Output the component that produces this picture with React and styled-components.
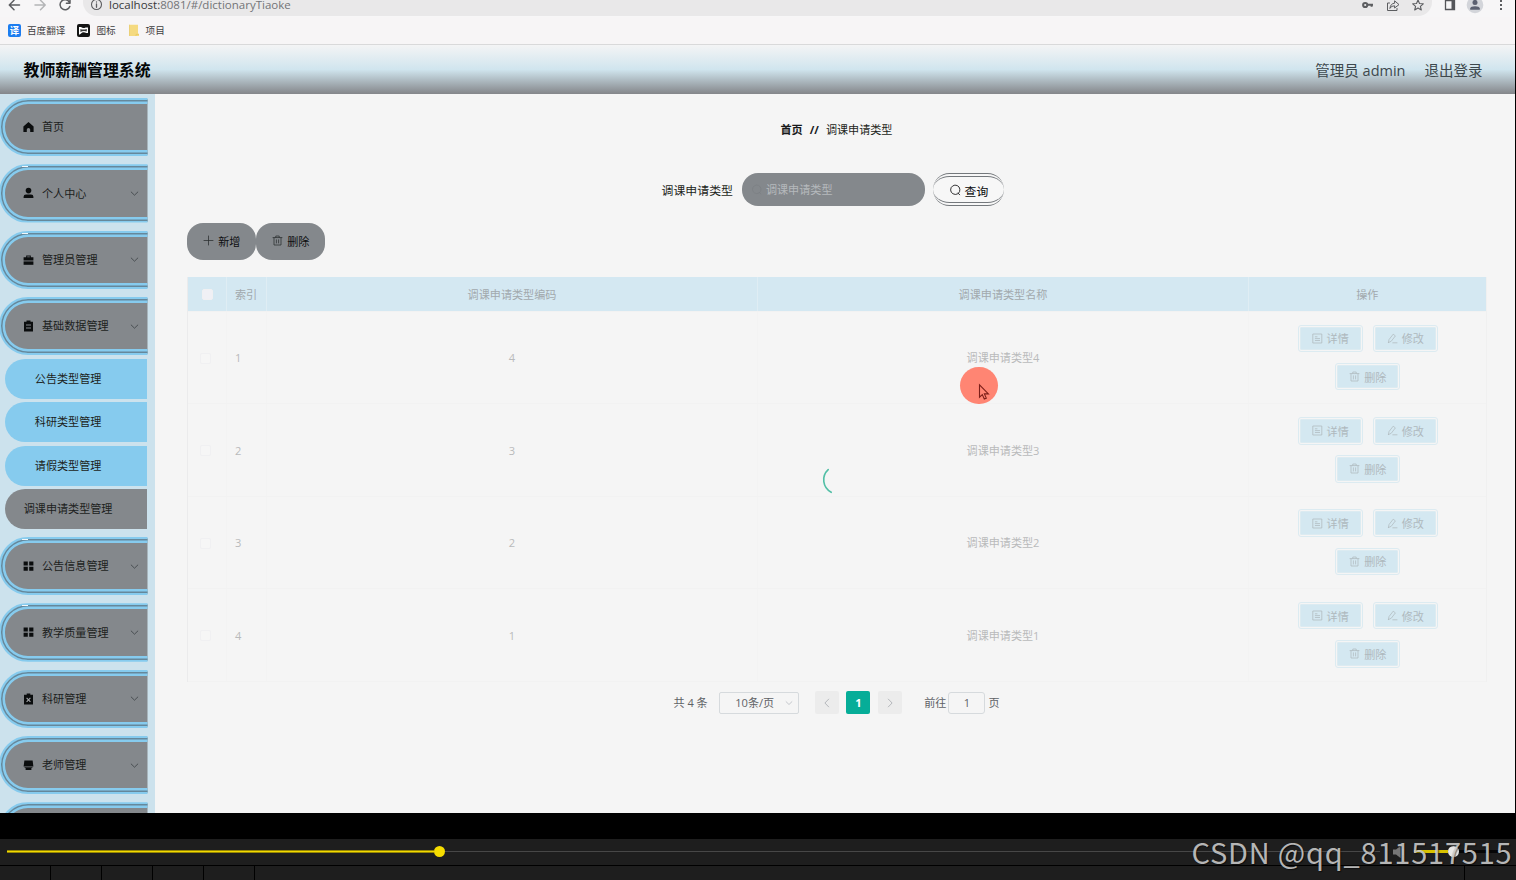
import React from 'react';
import styled, { createGlobalStyle } from 'styled-components';

const GlobalStyle = createGlobalStyle`
  * {
    box-sizing: border-box;
  }

  body {
    margin: 0;
    background: #000;
    overflow: hidden;
    font-family: 'Open Sans', 'Noto Sans CJK SC', sans-serif;
    font-size: 11.1px;
    line-height: 16px;
    color: #1c1e20;
  }
`;

const Screen = styled.div`
  position: relative;
  width: 1516px;
  height: 880px;
  overflow: hidden;
  background: #000;
`;

const BrowserWindow = styled.div`
  display: flex;
  flex-direction: column;
  width: 1515px;
  height: 813px;
  overflow: hidden;
  background: #f5f5f5;
`;

/* browser chrome */

const AddressBar = styled.div`
  flex: none;
  display: flex;
  align-items: flex-start;
  height: 17px;
  background: #f7f6f7;
  color: #5c5d60;

  > svg {
    flex: none;
    margin-top: -3px;
  }
`;

const AddressPill = styled.div`
  flex: none;
  display: flex;
  width: 1349px;
  height: 16px;
  margin-left: 3px;
  padding-left: 7px;
  padding-right: 7px;
  background: #e9e8e9;
  border-radius: 0 0 14px 14px;

  svg {
    flex: none;
    margin-top: -2px;
  }
`;

const Url = styled.span`
  flex: 1;
  margin-left: 6px;
  font-size: 11.5px;
  line-height: 10px;
  color: #737477;

  b {
    font-weight: 400;
    color: #38393b;
  }
`;

const PillIcons = styled.div`
  display: flex;
  gap: 11px;
`;

const Bookmarks = styled.div`
  flex: none;
  display: flex;
  align-items: center;
  height: 28px;
  padding: 0 0 1px 8px;
  background: #f7f5f6;
  border-bottom: 1px solid #d9d9da;
  font-size: 9.6px;
  color: #3f4042;

  svg {
    flex: none;
    margin-right: 6px;
  }

  span {
    margin-right: 12px;
    padding-top: 1px;
  }
`;

/* application header */

const Header = styled.header`
  flex: none;
  display: flex;
  align-items: center;
  justify-content: space-between;
  height: 49px;
  padding: 0 32.5px 0 23.5px;
  background: linear-gradient(180deg, #f4f4f5 0%, #d0e5ee 50%, #84868a 100%);
`;

const Brand = styled.h1`
  margin: 0;
  font-size: 15.9px;
  line-height: 24px;
  font-weight: 700;
  color: #050708;
`;

const Account = styled.div`
  display: flex;
  gap: 19px;
  padding-top: 2px;
  font-size: 14.5px;
  line-height: 22px;
  color: #3e484d;
`;

const Body = styled.div`
  flex: 1;
  min-height: 0;
  display: flex;
`;

/* side menu */

const Sidebar = styled.nav`
  flex: none;
  width: 155px;
  padding-top: 4px;
  background: #cce2ed;
  overflow: hidden;
`;

/* the right end of the rings is clipped, so the item runs off flat */
const MenuItem = styled.div`
  position: relative;
  display: flex;
  align-items: center;
  width: 156.5px;
  height: 58.3px;
  margin: 0 0 8px -1.5px;
  padding: 0 14.5px 0 21.5px;
  background: #84888c;
  border: 2px solid #86cbee;
  border-radius: 29px 0 0 29px;
  box-shadow: inset 0 0 0 1.5px #66889b, inset 0 0 0 4px #86cbee;
  clip-path: inset(0 7.5px 0 0);

  > span {
    flex: 1;
    margin-left: 7px;
    padding-top: 0.5px;
  }

  > svg {
    flex: none;
  }

  &::before {
    content: '';
    display: ${props => (props.$glint ? 'block' : 'none')};
    position: absolute;
    top: 0;
    left: 21px;
    width: 6px;
    height: 1px;
    background: #f3f7f9;
  }
`;

const SubMenu = styled.div`
  display: flex;
  flex-direction: column;
  gap: 3.8px;
  margin: -4.3px 0 8px 4.7px;
`;

const SubItem = styled.div`
  width: 142.8px;
  height: 39.7px;
  padding-right: 16px;
  line-height: 40px;
  text-align: center;
  border-radius: 20px 0 0 20px;
  background: ${props => (props.$active ? '#84888c' : '#86cbee')};
`;

/* content */

const Content = styled.main`
  flex: 1;
  display: flex;
  flex-direction: column;
  padding: 28px 29px 0 32px;
  background: #f5f5f5;
`;

const Breadcrumb = styled.div`
  display: flex;
  justify-content: center;
  gap: 7px;
  height: 16px;

  b {
    color: #17191b;
  }
`;

const SearchRow = styled.div`
  display: flex;
  align-items: center;
  justify-content: center;
  height: 33px;
  margin-top: 35px;
  padding-right: 7.5px;
`;

const SearchLabel = styled.label`
  font-size: 11.9px;
  margin-right: 9px;
`;

const SearchInput = styled.div`
  display: flex;
  align-items: center;
  width: 183px;
  height: 33px;
  padding-left: 9px;
  border-radius: 16px;
  background: #84888c;
  color: #b5b9bc;

  svg {
    margin-right: 4px;
    color: #7b7f83;
  }
`;

const QueryButton = styled.button`
  display: flex;
  align-items: center;
  justify-content: center;
  gap: 4px;
  width: 71px;
  height: 33px;
  margin-left: 8px;
  padding: 1px 0 0;
  border: 4px double #74787c;
  border-left: 0;
  border-right: 0;
  border-radius: 17px;
  background: #f7f7f7;
  font-family: inherit;
  font-size: 11.8px;
  color: #08090a;
`;

const Toolbar = styled.div`
  display: flex;
  margin-top: 17px;
`;

const ToolButton = styled.button`
  display: flex;
  align-items: center;
  justify-content: center;
  gap: 4.5px;
  width: 69px;
  height: 36.5px;
  padding: 0 0 1px;
  border: 0;
  border-radius: 16px;
  background: #84888c;
  font-family: inherit;
  font-size: 11.1px;
  color: #0d0f10;

  svg {
    color: #2a2d2f;
  }
`;

const Table = styled.div`
  margin-top: 17.6px;
  margin-right: -0.5px;
  border-left: 1px solid #ebebec;
  border-right: 1px solid #f0f0f0;
`;

const TableRow = styled.div`
  display: grid;
  grid-template-columns: 39px 40px 491px 491px 1fr;
  height: ${props => (props.$head ? '35px' : '92.4px')};
  background: ${props => (props.$head ? '#d4e8f2' : 'transparent')};
  border-bottom: 1px solid #f2f2f2;
  color: ${props => (props.$head ? '#a2a9ad' : '#b9babb')};
`;

const Cell = styled.div`
  display: flex;
  align-items: center;
  justify-content: ${props => (props.$left ? 'flex-start' : 'center')};
  padding-top: 1.4px;
  padding-left: ${props => (props.$left ? '8px' : '0')};
  border-right: 1px solid ${props => (props.$head ? '#dfedf4' : '#f3f3f3')};

  &:last-child {
    border-right: 0;
  }
`;

const Checkbox = styled.i`
  width: 11px;
  height: 11px;
  margin-right: ${props => (props.$head ? '0' : '4px')};
  border: 1px solid #f0f0f2;
  border-radius: 2px;
  background: ${props => (props.$head ? '#f0f0f5' : '#f6f6f6')};
`;

const Actions = styled.div`
  display: flex;
  flex-wrap: wrap;
  justify-content: center;
  gap: 10.5px;
  width: 160px;
  margin: -2px 0 0 1px;
`;

const ActionButton = styled.button`
  display: flex;
  align-items: center;
  justify-content: center;
  gap: 4px;
  width: 64.7px;
  height: 27.6px;
  padding: 0;
  border: 3px double #dcebf1;
  border-radius: 3px;
  background: #d4e8f1 padding-box;
  font-family: inherit;
  font-size: 11.1px;
  color: #afb9be;
`;

const Pagination = styled.div`
  display: flex;
  align-items: center;
  justify-content: center;
  height: 23px;
  margin-top: 9.4px;
  color: #606266;
`;

const PageSize = styled.div`
  display: flex;
  align-items: center;
  justify-content: space-between;
  width: 80px;
  height: 22px;
  margin: 0 15.5px 0 11.5px;
  padding: 0 5px 0 15px;
  border: 1px solid #d6dadd;
  border-radius: 2px;
  color: #606266;
`;

const PageButton = styled.div`
  display: flex;
  align-items: center;
  justify-content: center;
  width: 24px;
  height: 22.5px;
  margin-right: 7.7px;
  border-radius: 2px;
  background: ${props => (props.$current ? '#06ad98' : '#ececec')};
  color: ${props => (props.$current ? '#fff' : '#b8bbc0')};
  font-weight: 700;
`;

const PageInput = styled.div`
  width: 37px;
  height: 22px;
  margin: 0 3px 0 2px;
  border: 1px solid #d6dadd;
  border-radius: 3px;
  line-height: 20px;
  text-align: center;
`;

const Jump = styled.div`
  display: flex;
  align-items: center;
  margin-left: 14.5px;
`;

/* overlays */

const Spinner = styled.svg`
  position: absolute;
  left: 821px;
  top: 466px;
`;

const ClickMark = styled.div`
  position: absolute;
  left: 960.3px;
  top: 366.5px;
  width: 37.5px;
  height: 37.5px;
  border-radius: 50%;
  background: #ff8573;

  svg {
    position: absolute;
    left: 17.5px;
    top: 16.5px;
  }
`;

/* video player */

const Player = styled.div`
  height: 41px;
  margin-top: 26px;
  background: #1e1e1e;
`;

const Seek = styled.div`
  display: flex;
  align-items: center;
  height: 26px;
  padding: 0 0 1px 7px;
`;

const Played = styled.div`
  width: 427px;
  height: 3px;
  background: #f2d900;
  border: solid #968703;
  border-width: 1px 0;
`;

const Knob = styled.div`
  width: 11px;
  height: 11px;
  border-radius: 50%;
  background: ${props => props.$color};
`;

const Remaining = styled.div`
  width: 935px;
  height: 1px;
  margin-right: 12px;
  background: #474747;
`;

const Volume = styled.div`
  width: 34px;
  height: 3px;
  margin-left: 8px;
  background: #d9c200;
`;

const VolumeRest = styled.div`
  width: 45px;
  height: 3px;
  background: #060606;
`;

const Controls = styled.div`
  display: flex;
  height: 15px;
  border-top: 1px solid #000;
`;

const ControlSlot = styled.div`
  width: ${props => props.$width || 51}px;
  border-right: 1px solid #000;
`;

const Watermark = styled.div`
  position: absolute;
  left: 1191.5px;
  top: 829px;
  font-family: 'Noto Sans CJK SC', sans-serif;
  font-size: 29px;
  line-height: 44px;
  letter-spacing: 0.78px;
  white-space: nowrap;
  color: rgba(205, 205, 205, 0.88);
  text-shadow: 1px 1px 1px rgba(0, 0, 0, 0.5);
`;

const stroke = { fill: 'none', stroke: 'currentColor', strokeLinecap: 'round', strokeLinejoin: 'round' };

const MenuIcon = ({ name }) => (
  <svg width="13" height="12" viewBox="0 0 13 12" fill="#0b0d0e">
    {name === 'home' && <path d="M6.5 1 L11.6 5.6 V11 H8.2 V8.4 Q8.2 6.9 6.5 6.9 Q4.8 6.9 4.8 8.4 V11 H1.4 V5.6 Z" />}
    {name === 'user' && (
      <>
        <circle cx="6.5" cy="3.6" r="2.8" />
        <path d="M1.6 11 V9.7 Q1.6 7.4 4 7.4 H9 Q11.4 7.4 11.4 9.7 V11 Z" />
      </>
    )}
    {name === 'case' && (
      <>
        <path d="M4.2 3.2 V1.6 H8.8 V3.2 H11.4 V6.6 H1.6 V3.2 Z M5.2 3.2 H7.8 V2.5 H5.2 Z" fillRule="evenodd" />
        <path d="M1.6 7.4 H11.4 V10.8 H1.6 Z" />
      </>
    )}
    {name === 'list' && (
      <>
        <path d="M2 1.7 H11 V11.4 H2 Z M4.5 0.6 H8.5 V2.6 H4.5 Z" />
        <path d="M4 5 H9 M4 8 H9" stroke="#84888c" strokeWidth="1" />
      </>
    )}
    {name === 'grid' && <path d="M1.6 1.4 H5.8 V5.4 H1.6 Z M7.2 1.4 H11.4 V5.4 H7.2 Z M1.6 6.8 H5.8 V10.8 H1.6 Z M7.2 6.8 H11.4 V10.8 H7.2 Z" />}
    {name === 'failed' && (
      <>
        <path d="M2 1.7 H11 V11.4 H2 Z M4.7 0.4 H8.3 V2.6 H4.7 Z" />
        <path d="M4.6 4.8 L8.4 8.8 M8.4 4.8 L4.6 8.8" stroke="#a3a6a9" strokeWidth="1.1" />
      </>
    )}
    {name === 'shop' && (
      <>
        <path d="M2.4 1.4 H10.6 L11.4 7.4 H1.6 Z" />
        <path d="M2.6 8.2 H10.4 V9 H9.4 V11 H3.6 V9 H2.6 Z" />
      </>
    )}
  </svg>
);

const Chevron = ({ dir = 'down', size = 9, color = '#43484c' }) => {
  const d = { down: 'M1.2 3 L4.5 6.2 L7.8 3', left: 'M6 1 L2.6 4.5 L6 8', right: 'M3 1 L6.4 4.5 L3 8' }[dir];
  return (
    <svg width={size} height={size} viewBox="0 0 9 9" {...stroke} stroke={color} strokeWidth="0.9">
      <path d={d} />
    </svg>
  );
};

const Icon = ({ name, size = 11 }) => (
  <svg width={size} height={size} viewBox="0 0 11 11" {...stroke} strokeWidth="0.75">
    {name === 'plus' && <path d="M5.5 1 V10 M1 5.5 H10" />}
    {name === 'trash' && <path d="M1 2.6 H10 M3.8 2.4 V1 H7.2 V2.4 M2 2.8 V10 H9 V2.8 M4.4 4.8 V8 M6.6 4.8 V8" />}
    {name === 'detail' && <path d="M1.2 1 H9.8 V10 H1.2 Z M3.3 3.8 H5 M3.3 5.6 H7.6 M3.3 7.5 H7.6" />}
    {name === 'edit' && <path d="M1.4 9.6 L2 6.6 L6.2 1.2 L8.4 2.9 L4.2 8.3 L1.4 9.6 M5.8 9.8 H10" />}
    {name === 'search' && <path d="M7.7 9.2 A4.3 4.3 0 1 1 8.6 8.6 M8.2 8.3 L9.8 9.9" />}
  </svg>
);

const menuTop = [
  { label: '首页', icon: 'home', leaf: true },
  { label: '个人中心', icon: 'user', glint: true },
  { label: '管理员管理', icon: 'case', glint: true },
  { label: '基础数据管理', icon: 'list' },
];

const subItems = ['公告类型管理', '科研类型管理', '请假类型管理', '调课申请类型管理'];

const menuBottom = [
  { label: '公告信息管理', icon: 'grid', glint: true },
  { label: '教学质量管理', icon: 'grid', glint: true },
  { label: '科研管理', icon: 'failed' },
  { label: '老师管理', icon: 'shop' },
  { label: '', icon: 'grid' },
];

const rows = [4, 3, 2, 1];

const renderMenu = items =>
  items.map((item, index) => (
    <MenuItem key={index} $glint={item.glint}>
      <MenuIcon name={item.icon} />
      <span>{item.label}</span>
      {!item.leaf && <Chevron />}
    </MenuItem>
  ));

const BrowserChrome = () => (
  <>
    <AddressBar>
      <svg width="80" height="16" viewBox="0 0 80 16" {...stroke} strokeWidth="1.5">
        <path d="M19.5 8 H9.5 M14 3.3 L9.3 8 L14 12.7" />
        <path d="M35 8 H45 M40.5 3.3 L45.2 8 L40.5 12.7" stroke="#b4b5b7" />
        <path d="M69.3 5 A5 5 0 1 0 69.8 9.4 M70 2.6 V6.2 H66.4" />
      </svg>
      <AddressPill>
        <svg width="13" height="13" viewBox="0 0 13 13" {...stroke} strokeWidth="1.1">
          <circle cx="6.5" cy="6.5" r="5" />
          <path d="M6.5 6 V9.3 M6.5 3.8 V4" strokeWidth="1.3" />
        </svg>
        <Url>
          <b>localhost:</b>8081/#/dictionaryTiaoke
        </Url>
        <PillIcons>
          <svg width="14" height="14" viewBox="0 0 14 14" {...stroke} strokeWidth="2">
            <circle cx="4.2" cy="7" r="2.1" />
            <path d="M6.5 6.8 H12 M10.6 7 V8.8" strokeLinecap="butt" />
          </svg>
          <svg width="14" height="14" viewBox="0 0 14 14" {...stroke} strokeWidth="1">
            <path d="M3.5 5 H1.5 V12.5 H11 V10.5 M4 10 Q4.5 5.5 8.6 5.2 V2.8 L13 6.6 L8.6 10 V7.8 Q5.8 7.6 4 10 Z" />
          </svg>
          <svg width="14" height="14" viewBox="0 0 14 14" {...stroke} strokeWidth="1.1">
            <path d="M7 2 L8.5 5.5 L12.3 5.8 L9.4 8.3 L10.3 12 L7 10 L3.7 12 L4.6 8.3 L1.7 5.8 L5.5 5.5 Z" />
          </svg>
        </PillIcons>
      </AddressPill>
      <svg width="83" height="17" viewBox="0 0 83 17" fill="none">
        <path d="M13.5 3.5 H22.5 V12.5 H13.5 Z" stroke="#55565a" strokeWidth="1.3" />
        <path d="M19.5 3.5 H22.5 V12.5 H19.5 Z" fill="#55565a" />
        <circle cx="43" cy="8" r="8.3" fill="#d3d5da" />
        <circle cx="43" cy="5.4" r="2.5" fill="#5b6070" />
        <path d="M38.2 12.8 V11.3 Q38.6 9.2 43 9.2 Q47.4 9.2 47.8 11.3 V12.8 Z" fill="#5b6070" />
        <path d="M68 3 h2 v2 h-2 z M68 7 h2 v2 h-2 z M68 11 h2 v2 h-2 z" fill="#5c5d60" />
      </svg>
    </AddressBar>
    <Bookmarks>
      <svg width="13" height="13" viewBox="0 0 13 13">
        <rect width="13" height="13" rx="2" fill="#1c7df0" />
        <text x="6.5" y="10" textAnchor="middle" fontSize="9.5" fontWeight="700" fill="#fff">
          译
        </text>
      </svg>
      <span>百度翻译</span>
      <svg width="13" height="13" viewBox="0 0 13 13">
        <rect width="13" height="13" rx="2" fill="#141414" />
        <path d="M2 10.6 V3 H4 Q6 4.6 8.6 3.4 H11 V9 H9.4 Q6 7.4 4 9.4 L2.8 10.6 Z" fill="#fff" />
        <path d="M3.4 5 Q6 6 9.8 5 V7.4 Q6 6.6 3.4 8 Z" fill="#3a3a3a" />
      </svg>
      <span>图标</span>
      <svg width="12" height="13" viewBox="0 0 12 13">
        <path d="M1.5 0.7 H10 V9.5 L11 10 V12 H1.5 Z" fill="#f5da80" />
        <path d="M1.5 12 V0.7 M8 12 V10.4 H11" stroke="#e6c65c" fill="none" strokeWidth="0.7" />
      </svg>
      <span>项目</span>
    </Bookmarks>
  </>
);

const TypeTable = () => (
  <Table>
    <TableRow $head>
      <Cell $head>
        <Checkbox $head />
      </Cell>
      <Cell $head $left>索引</Cell>
      <Cell $head>调课申请类型编码</Cell>
      <Cell $head>调课申请类型名称</Cell>
      <Cell $head>操作</Cell>
    </TableRow>
    {rows.map((code, index) => (
      <TableRow key={code}>
        <Cell>
          <Checkbox />
        </Cell>
        <Cell $left>{index + 1}</Cell>
        <Cell>{code}</Cell>
        <Cell>调课申请类型{code}</Cell>
        <Cell>
          <Actions>
            <ActionButton>
              <Icon name="detail" />
              详情
            </ActionButton>
            <ActionButton>
              <Icon name="edit" />
              修改
            </ActionButton>
            <ActionButton>
              <Icon name="trash" />
              删除
            </ActionButton>
          </Actions>
        </Cell>
      </TableRow>
    ))}
  </Table>
);

const App = () => (
  <Screen lang="zh-CN">
    <GlobalStyle />
    <BrowserWindow>
      <BrowserChrome />
      <Header>
        <Brand>教师薪酬管理系统</Brand>
        <Account>
          <span>管理员 admin</span>
          <span>退出登录</span>
        </Account>
      </Header>
      <Body>
        <Sidebar>
          {renderMenu(menuTop)}
          <SubMenu>
            {subItems.map((label, index) => (
              <SubItem key={label} $active={index === 3}>
                {label}
              </SubItem>
            ))}
          </SubMenu>
          {renderMenu(menuBottom)}
        </Sidebar>
        <Content>
          <Breadcrumb>
            <b>首页</b>
            <b>//</b>
            <span>调课申请类型</span>
          </Breadcrumb>
          <SearchRow>
            <SearchLabel>调课申请类型</SearchLabel>
            <SearchInput>
              <Icon name="search" />
              调课申请类型
            </SearchInput>
            <QueryButton>
              <Icon name="search" size={12} />
              查询
            </QueryButton>
          </SearchRow>
          <Toolbar>
            <ToolButton>
              <Icon name="plus" />
              新增
            </ToolButton>
            <ToolButton>
              <Icon name="trash" />
              删除
            </ToolButton>
          </Toolbar>
          <TypeTable />
          <Pagination>
            <span>共 4 条</span>
            <PageSize>
              10条/页
              <Chevron size={8} color="#b9bdc3" />
            </PageSize>
            <PageButton>
              <Chevron dir="left" size={10} color="#b4b7bb" />
            </PageButton>
            <PageButton $current>1</PageButton>
            <PageButton>
              <Chevron dir="right" size={10} color="#b4b7bb" />
            </PageButton>
            <Jump>
              前往
              <PageInput>1</PageInput>
              页
            </Jump>
          </Pagination>
        </Content>
      </Body>
    </BrowserWindow>
    <Spinner width="30" height="30" viewBox="0 0 30 30" {...stroke} stroke="#52bfa6" strokeWidth="1.6">
      <path d="M7.2 3.6 A14 14 0 0 0 10.2 26.3" />
    </Spinner>
    <ClickMark>
      <svg width="13" height="18" viewBox="0 0 13 18" fill="#ff8573" stroke="#7c1f19" strokeWidth="1.1">
        <path d="M1.5 1.8 V14.2 L4.3 11.6 L6.3 16 L8.3 15.1 L6.4 10.9 H10.4 Z" />
      </svg>
    </ClickMark>
    <Player>
      <Seek>
        <Played />
        <Knob $color="#f6dd00" />
        <Remaining />
        <svg width="14" height="14" viewBox="0 0 14 14" fill="#777">
          <path d="M1 4.5 H4 L8.5 1 V13 L4 9.5 H1 Z M10.5 4 H11.5 V10 H10.5 Z" />
        </svg>
        <Volume />
        <Knob $color="#e8e8e8" />
        <VolumeRest />
      </Seek>
      <Controls>
        <ControlSlot />
        <ControlSlot />
        <ControlSlot />
        <ControlSlot />
        <ControlSlot />
        <ControlSlot $width={1210} />
      </Controls>
    </Player>
    <Watermark>CSDN @qq_811517515</Watermark>
  </Screen>
);

export default App;
